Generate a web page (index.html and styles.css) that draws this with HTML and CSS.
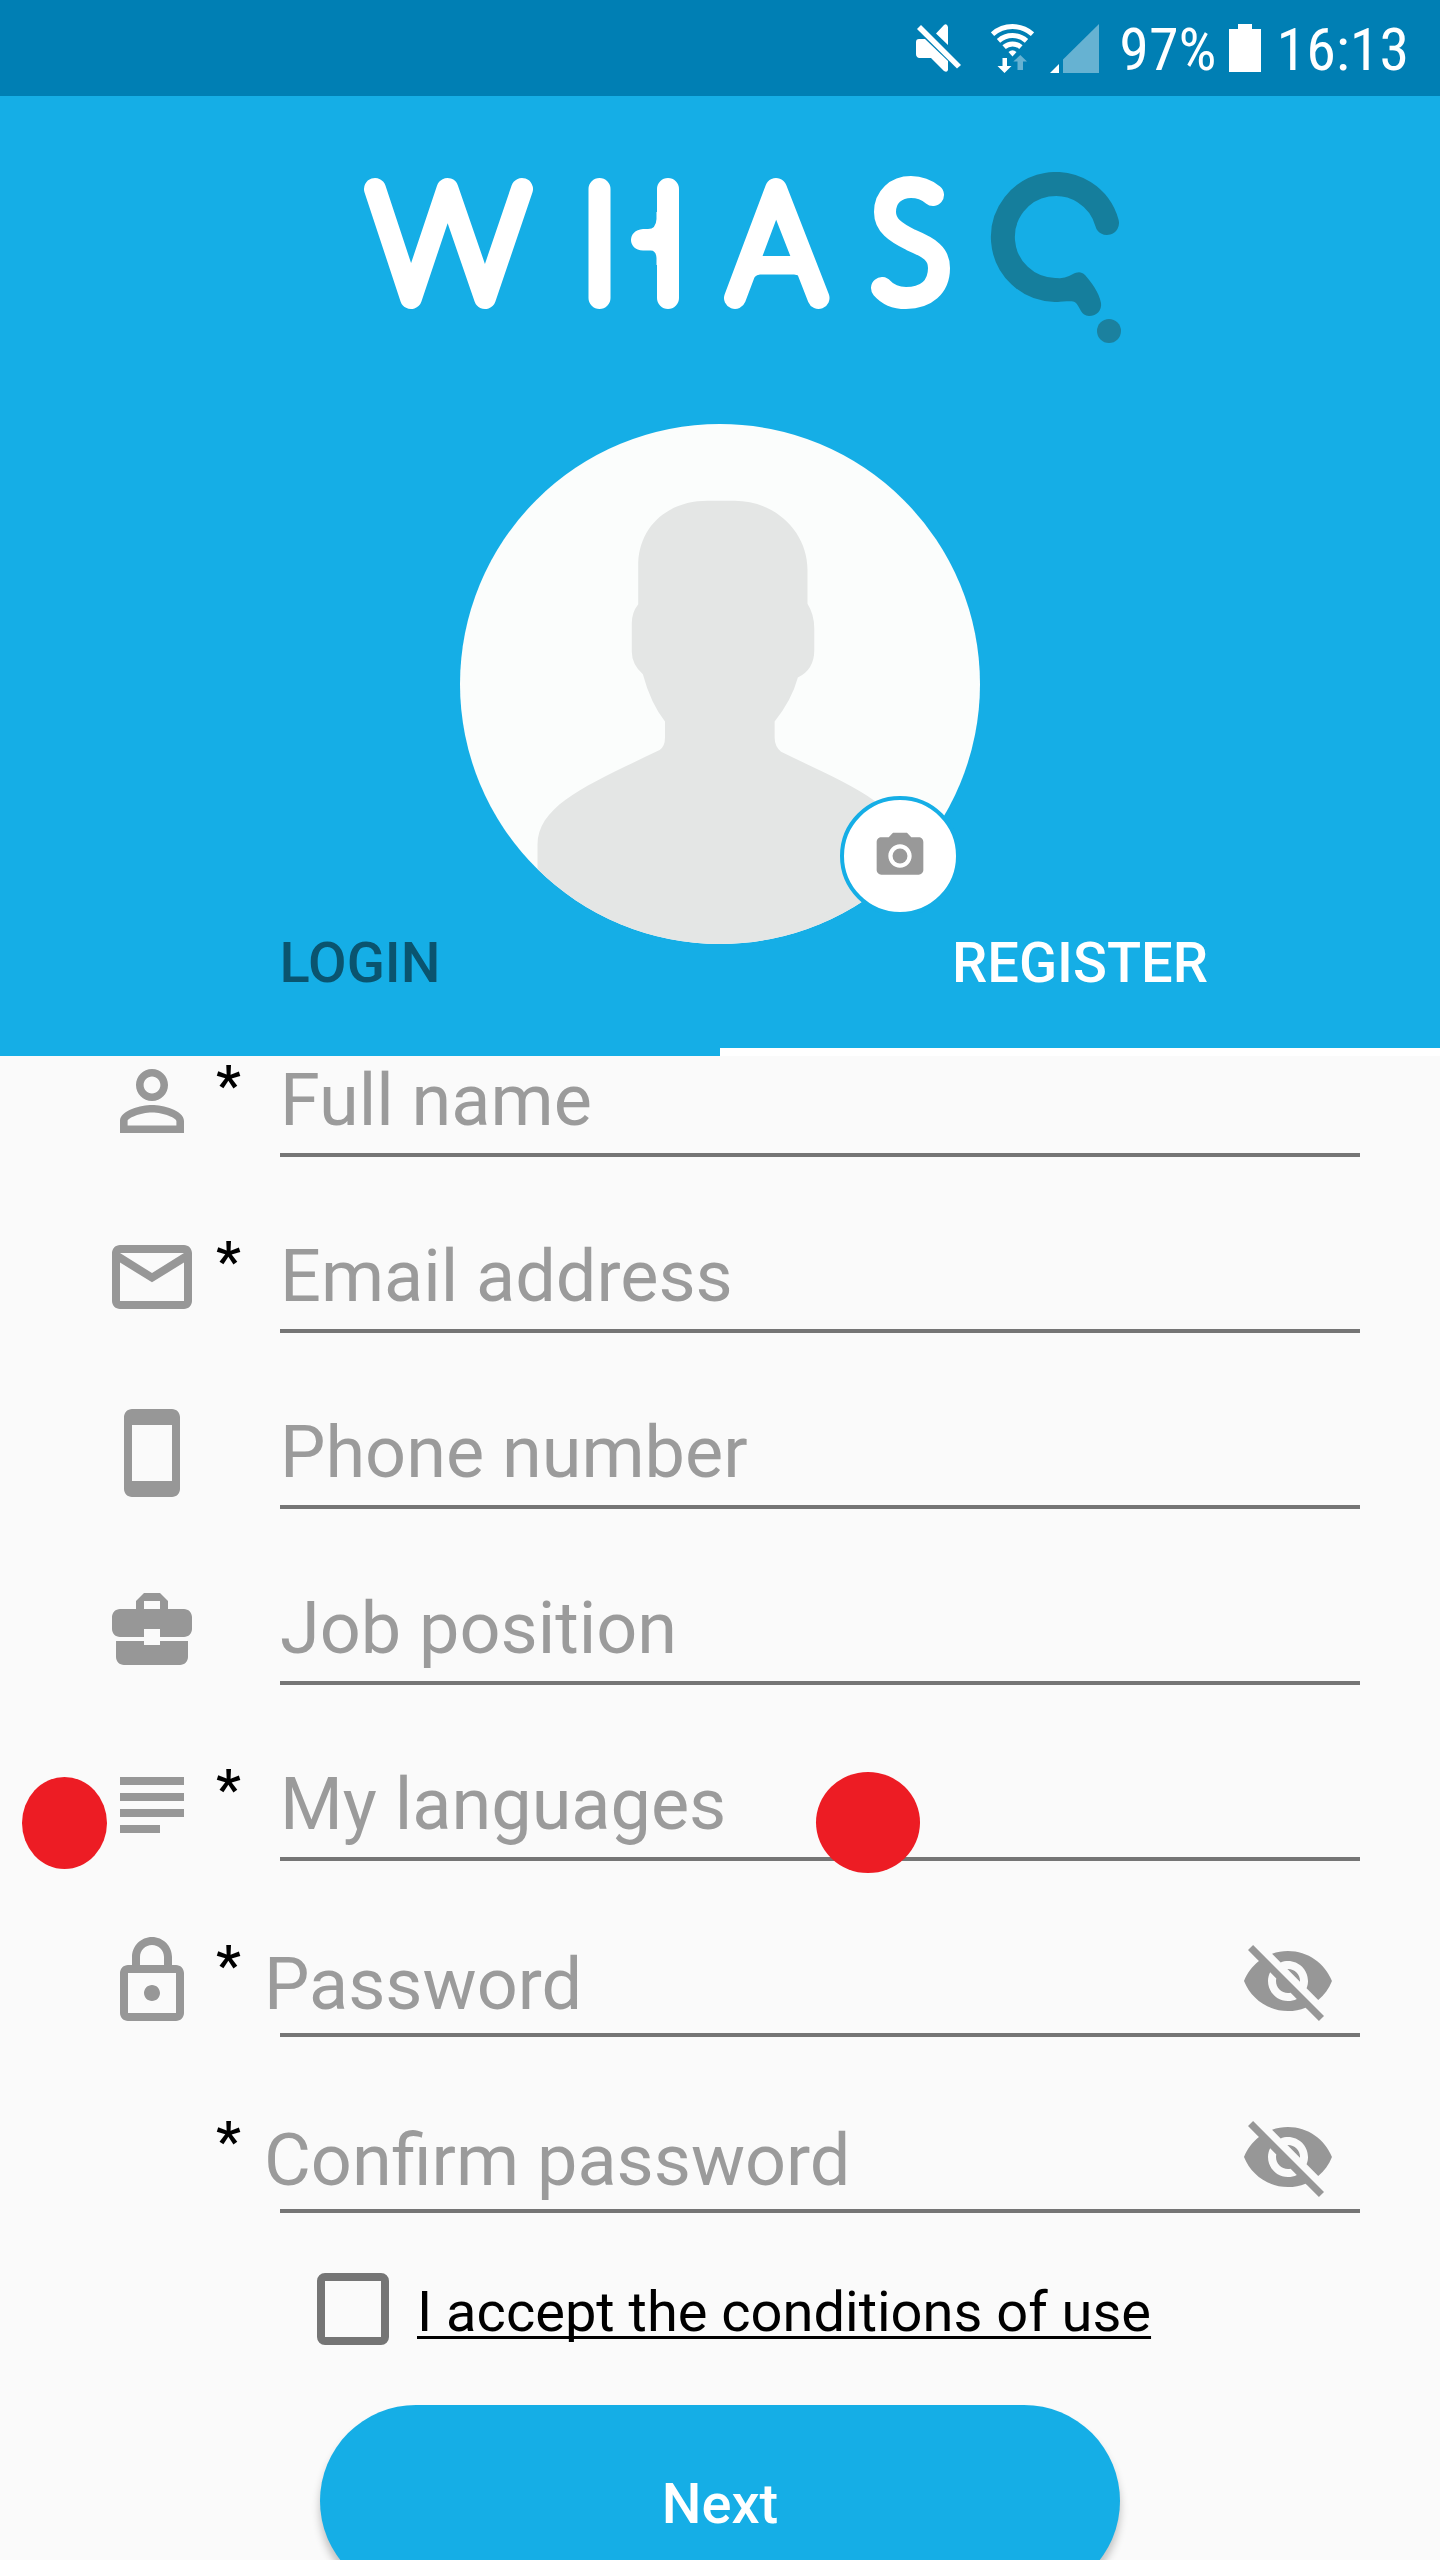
FILE: index.html
```html
<!DOCTYPE html>
<html lang="en">
<head>
<meta charset="utf-8">
<meta name="viewport" content="width=device-width, initial-scale=1">
<title>Whasq – Register</title>
<link rel="stylesheet" href="styles.css">
</head>
<body>
<div class="app">
  <div class="status-bar">
    <svg class="status-mute" width="45" height="48" viewBox="0 0 45 48" aria-hidden="true">
      <path d="M0 18Q0 15 3 15H9L32 37V46Q31 49 28 47L15 34H3Q0 33 0 30ZM20 9.500L28 1Q31-1 32 3V21Z"/>
      <path d="M5 1L45 41L41 44.500L1 5Z"/>
    </svg>
    <svg class="status-wifi" width="43" height="49" viewBox="0 0 43 49" aria-hidden="true">
      <g class="wifi-waves">
        <path d="M1.500 10.200A30 30 0 0 1 41.500 10.200"/>
        <path d="M7.500 16.900A21 21 0 0 1 35.500 16.900"/>
        <path d="M13.100 23.200A12.500 12.500 0 0 1 29.900 23.200"/>
      </g>
      <path d="M17.500 28Q21.500 24.500 25.500 28L21.500 32.500Z"/>
      <path d="M11.500 34H16V42H20.500L13.500 49L6.500 42H11.500Z"/>
      <path class="dim" d="M26.500 46H32V37.500H36L29.300 31L22.300 37.500H26.500Z"/>
    </svg>
    <svg class="status-signal" width="49" height="49" viewBox="0 0 49 49" aria-hidden="true">
      <path class="dim" d="M49 0V49H13V35.500Z"/>
      <path d="M0 49L9 40V49Z"/>
    </svg>
    <span class="status-text">97%</span>
    <svg class="status-battery" width="32" height="48" viewBox="0 0 32 48" aria-hidden="true">
      <path d="M9 0H23V5H32V48H0V5H9Z"/>
    </svg>
    <span class="status-text">16:13</span>
  </div>

  <header class="header">
    <svg class="logo" viewBox="316 172 808 172" role="img" aria-label="Whasq">
      <g class="logo-strokes">
        <path d="M375 189L411 298L447.500 189L485 298L522 189"/>
        <path d="M599.500 189V298M668 189V298"/>
        <path d="M735 298L776 189L818.500 298"/>
        <path d="M933 195C927 190 920 187 911 187C896 187 885 197 885 212C885 225 895 232 911 240C930 248 939 254 939 268C939 287 926 298 906 298C896 298 888 295 882 288"/>
      </g>
      <path class="logo-fill" d="M668 212H656.500V219Q656 229 648 229H643C627 230 627 250 643 250.500H650Q656 250 656.500 258V265H668ZM758 256H796L806 285Q802 274.500 794 274.500H760Q754 274.500 749 285Z"/>
      <path class="logo-ring" d="M1107 223A53 53 0 1 0 1055 290"/>
      <path class="logo-tail" d="M1055 302C1066 302 1072 300 1076 303C1080 307 1081 316 1089 316C1097 316 1102 310 1101 303C1099 292 1091 282 1085 275C1081 271 1077 272 1073 274C1068 277 1062 278.500 1055 278.500Z"/>
      <circle class="logo-dot" cx="1109" cy="331" r="12"/>
    </svg>

    <div class="avatar">
      <svg class="avatar-image" viewBox="56 67 1456 1456" role="img" aria-label="Profile picture">
        <path d="M273 1530V1245C273 1130 430 1070 615 980Q630 970 630 945V900Q590 850 568 768Q537 740 537 705V625Q537 595 555 572V455C560 350 640 282 750 282H825C940 282 1029 370 1029 475V570Q1048 600 1048 640V700Q1048 755 1002 777Q985 840 937 900V945Q937 970 955 985C1140 1075 1295 1130 1305 1260V1530Z"/>
      </svg>
      <button class="camera" type="button" aria-label="Change picture">
        <svg width="56" height="56" viewBox="0 0 24 24" aria-hidden="true">
          <circle cx="12" cy="12" r="3.200"/>
          <path d="M9 2L7.170 4H4c-1.100 0-2 .9-2 2v12c0 1.100.9 2 2 2h16c1.100 0 2-.9 2-2V6c0-1.100-.9-2-2-2h-3.170L15 2H9zm3 15c-2.760 0-5-2.240-5-5s2.240-5 5-5 5 2.240 5 5-2.240 5-5 5z"/>
        </svg>
      </button>
    </div>

    <nav class="tabs">
      <a class="tab" href="#login">LOGIN</a>
      <a class="tab tab-active" href="#register" aria-current="page">REGISTER</a>
    </nav>
  </header>

  <form class="form" id="register">
    <div class="row">
      <svg class="icon" viewBox="0 0 24 24" aria-hidden="true"><path d="M12 5.900c1.160 0 2.100.94 2.100 2.100s-.94 2.100-2.100 2.100S9.900 9.160 9.900 8s.94-2.100 2.100-2.100m0 9c2.970 0 6.100 1.460 6.100 2.100v1.100H5.900V17c0-.64 3.130-2.100 6.100-2.100M12 4C9.790 4 8 5.790 8 8s1.790 4 4 4 4-1.790 4-4-1.790-4-4-4zm0 9c-2.670 0-8 1.340-8 4v3h16v-3c0-2.660-5.330-4-8-4z"/></svg>
      <label class="star" for="name">*</label>
      <div class="field"><input id="name" type="text" placeholder="Full name" aria-label="Full name"></div>
    </div>
    <div class="row">
      <svg class="icon" viewBox="0 0 24 24" aria-hidden="true"><path d="M20 4H4c-1.100 0-2 .9-2 2v12c0 1.100.9 2 2 2h16c1.100 0 2-.9 2-2V6c0-1.100-.9-2-2-2zm0 14H4V8.400l8 4.900 8-4.900V18zm-8-7L4 6h16l-8 5z"/></svg>
      <label class="star" for="email">*</label>
      <div class="field"><input id="email" type="email" placeholder="Email address" aria-label="Email address"></div>
    </div>
    <div class="row">
      <svg class="icon" viewBox="0 0 24 24" aria-hidden="true"><path d="M17 1H7c-1.100 0-2 .9-2 2v18c0 1.100.9 2 2 2h10c1.100 0 2-.9 2-2V3c0-1.100-.9-2-2-2zm0 18H7V5h10v14z"/></svg>
      <div class="field"><input id="phone" type="tel" placeholder="Phone number" aria-label="Phone number"></div>
    </div>
    <div class="row">
      <svg class="icon" viewBox="0 0 24 24" aria-hidden="true"><path d="M10 16v-1H3.010L3 19c0 1.110.89 2 2 2h14c1.110 0 2-.89 2-2v-4h-7v1h-4zm10-9h-4V5l-2-2h-4L8 5v2H4c-1.100 0-2 .9-2 2v3c0 1.110.89 2 2 2h6v-2h4v2h6c1.100 0 2-.9 2-2V9c0-1.100-.9-2-2-2zm-6 0h-4V5h4v2z"/></svg>
      <div class="field"><input id="job" type="text" placeholder="Job position" aria-label="Job position"></div>
    </div>
    <div class="row">
      <svg class="icon" viewBox="0 0 24 24" aria-hidden="true"><path d="M4 5h16v2H4zM4 9h16v2H4zM4 13h16v2H4zM4 17h10v2H4z"/></svg>
      <label class="star" for="languages">*</label>
      <div class="field"><input id="languages" type="text" placeholder="My languages" aria-label="My languages"></div>
      <span class="marker marker-start"></span>
      <span class="marker marker-middle"></span>
    </div>
    <div class="row">
      <svg class="icon" viewBox="0 0 24 24" aria-hidden="true"><path d="M12 17c1.100 0 2-.9 2-2s-.9-2-2-2-2 .9-2 2 .9 2 2 2zm6-9h-1V6c0-2.760-2.240-5-5-5S7 3.240 7 6v2H6c-1.100 0-2 .9-2 2v10c0 1.100.9 2 2 2h12c1.100 0 2-.9 2-2V10c0-1.100-.9-2-2-2zM9 6c0-1.660 1.340-3 3-3s3 1.340 3 3v2H9V6zm9 14H6V10h12v10z"/></svg>
      <label class="star" for="password">*</label>
      <div class="field field-password">
        <input id="password" type="password" placeholder="Password" aria-label="Password">
        <button class="reveal" type="button" aria-label="Show password"><svg class="icon" viewBox="0 0 24 24" aria-hidden="true"><path d="M12 7c2.760 0 5 2.240 5 5 0 .65-.13 1.260-.36 1.830l2.920 2.920c1.510-1.260 2.700-2.890 3.430-4.750-1.730-4.390-6-7.500-11-7.500-1.400 0-2.740.25-3.980.7l2.160 2.160C10.740 7.130 11.350 7 12 7zM2 4.270l2.280 2.280.46.46C3.080 8.300 1.780 10.020 1 12c1.730 4.390 6 7.500 11 7.500 1.550 0 3.030-.3 4.380-.84l.42.42L19.730 22 21 20.730 3.270 3 2 4.270zM7.530 9.800l1.550 1.550c-.05.21-.08.43-.08.65 0 1.660 1.340 3 3 3 .22 0 .44-.03.65-.08l1.550 1.550c-.67.33-1.410.53-2.200.53-2.760 0-5-2.240-5-5 0-.79.2-1.530.53-2.200zm4.310-.78l3.150 3.150.02-.16c0-1.660-1.340-3-3-3l-.17.010z"/></svg></button>
      </div>
    </div>
    <div class="row">
      <label class="star" for="confirm">*</label>
      <div class="field field-password">
        <input id="confirm" type="password" placeholder="Confirm password" aria-label="Confirm password">
        <button class="reveal" type="button" aria-label="Show password"><svg class="icon" viewBox="0 0 24 24" aria-hidden="true"><path d="M12 7c2.760 0 5 2.240 5 5 0 .65-.13 1.260-.36 1.830l2.920 2.920c1.510-1.260 2.700-2.890 3.430-4.750-1.730-4.390-6-7.500-11-7.500-1.400 0-2.740.25-3.980.7l2.160 2.160C10.740 7.130 11.350 7 12 7zM2 4.270l2.280 2.280.46.46C3.080 8.300 1.780 10.020 1 12c1.730 4.390 6 7.500 11 7.500 1.550 0 3.030-.3 4.380-.84l.42.42L19.730 22 21 20.730 3.270 3 2 4.270zM7.530 9.800l1.550 1.550c-.05.21-.08.43-.08.65 0 1.660 1.340 3 3 3 .22 0 .44-.03.65-.08l1.550 1.550c-.67.33-1.410.53-2.200.53-2.760 0-5-2.240-5-5 0-.79.2-1.530.53-2.200zm4.310-.78l3.150 3.150.02-.16c0-1.660-1.340-3-3-3l-.17.010z"/></svg></button>
      </div>
    </div>

    <div class="terms">
      <input class="terms-box" id="terms" type="checkbox">
      <label class="terms-label" for="terms">I accept the conditions of use</label>
    </div>
    <button class="next" type="submit">Next</button>
  </form>
</div>
</body>
</html>
```
FILE: styles.css
```css
* {
  box-sizing: border-box;
}

body {
  margin: 0;
  background: #fafafa;
  font-family: Roboto, "Liberation Sans", sans-serif;
}

button,
input {
  margin: 0;
  padding: 0;
  border: 0;
  background: none;
  color: inherit;
  font: inherit;
}

.app {
  height: 100vh;
  overflow: hidden auto;
  scrollbar-width: none;
}

/* Status bar */

.status-bar {
  display: flex;
  align-items: center;
  justify-content: flex-end;
  height: 96px;
  padding-right: 31px;
  background: #007fb4;
  color: #fff;
}

.status-bar svg {
  fill: currentColor;
}

.status-mute {
  margin-right: 30px;
}

.status-wifi {
  margin-right: 16px;
}

.status-signal {
  margin-right: 20px;
}

.status-battery {
  margin: 0 16px 0 12px;
}

.status-bar .dim {
  fill: #66b2d2;
}

.wifi-waves {
  fill: none;
  stroke: currentColor;
  stroke-width: 5;
}

.status-text {
  padding-top: 4px;
  font-family: "Roboto Condensed", Roboto, sans-serif;
  font-size: 60px;
  line-height: 72px;
}

/* Header */

.header {
  display: flex;
  flex-direction: column;
  align-items: center;
  padding-top: 76px;
  background: #15aee6;
}

.logo {
  width: 808px;
  max-width: 90%;
}

.logo-strokes {
  fill: none;
  stroke: #fff;
  stroke-width: 22;
  stroke-linecap: round;
  stroke-linejoin: round;
}

.logo-fill {
  fill: #fff;
}

.logo-ring {
  fill: none;
  stroke: #157e9c;
  stroke-width: 24;
  stroke-linecap: round;
}

.logo-tail {
  fill: #157e9c;
}

.logo-dot {
  fill: #1b819f;
}

.avatar {
  position: relative;
  width: 520px;
  height: 520px;
  margin-top: 80px;
}

.avatar-image {
  display: block;
  border-radius: 50%;
  background: #fbfdfc;
  fill: #e4e6e5;
}

.camera {
  position: absolute;
  right: 20px;
  bottom: 28px;
  z-index: 1;
  display: grid;
  place-items: center;
  width: 120px;
  height: 120px;
  border: 4px solid #15aee6;
  border-radius: 50%;
  background: #fff;
}

.camera svg {
  fill: #999;
}

.tabs {
  display: flex;
  width: 100%;
  margin-top: -80px;
}

.tab {
  display: flex;
  flex: 1;
  align-items: center;
  justify-content: center;
  height: 192px;
  padding-top: 14px;
  border-bottom: 8px solid transparent;
  color: #0a546f;
  font-size: 56px;
  font-weight: 500;
  line-height: 64px;
  text-decoration: none;
}

.tab-active {
  border-bottom-color: #fff;
  color: #fff;
}

/* Form */

.form {
  display: flex;
  flex-direction: column;
  margin-top: -3px;
  padding-bottom: 60px;
}

.row {
  position: relative;
  display: grid;
  grid-template-columns: 96px 80px 1fr;
  height: 104px;
  margin-bottom: 72px;
  padding: 0 80px 0 104px;
}

.icon {
  display: block;
  width: 96px;
  height: 96px;
  fill: #979797;
}

.star {
  grid-column: 2;
  padding-left: 16px;
  color: #000;
  font-size: 56px;
  font-weight: 500;
  line-height: 66px;
}

.field {
  display: flex;
  grid-column: 3;
  border-bottom: 4px solid #757575;
}

.field input {
  flex: 1;
  min-width: 0;
  height: 100px;
  padding-bottom: 6px;
  outline: 0;
  color: #212121;
  font-size: 72px;
}

.field input::placeholder {
  color: #9b9b9b;
  opacity: 1;
}

.field-password input {
  margin-left: -16px;
  padding: 2px 0 0;
}

.reveal {
  width: 96px;
  height: 96px;
  margin-right: 24px;
}

.marker {
  position: absolute;
  border-radius: 50%;
  background: #ed1c24;
}

.marker-start {
  top: 20px;
  left: 22px;
  width: 85px;
  height: 92px;
}

.marker-middle {
  top: 15px;
  left: 816px;
  width: 104px;
  height: 101px;
}

.terms {
  display: flex;
  align-items: center;
  gap: 28px;
  margin: -12px 0 60px 317px;
}

.terms-box {
  width: 72px;
  height: 72px;
  border: 8px solid #757575;
  border-radius: 8px;
  appearance: none;
}

.terms-label {
  padding-top: 6px;
  font-size: 56px;
  line-height: 66px;
  text-decoration: underline;
  text-decoration-thickness: 3px;
  text-decoration-skip-ink: none;
  text-underline-offset: 5px;
}

.next {
  align-self: center;
  width: 800px;
  max-width: 90%;
  height: 192px;
  padding-top: 6px;
  border-radius: 96px;
  background: #15aee6;
  box-shadow: 0 8px 8px rgba(0, 0, 0, 0.24);
  color: #fff;
  font-size: 56px;
  font-weight: 500;
}
```
